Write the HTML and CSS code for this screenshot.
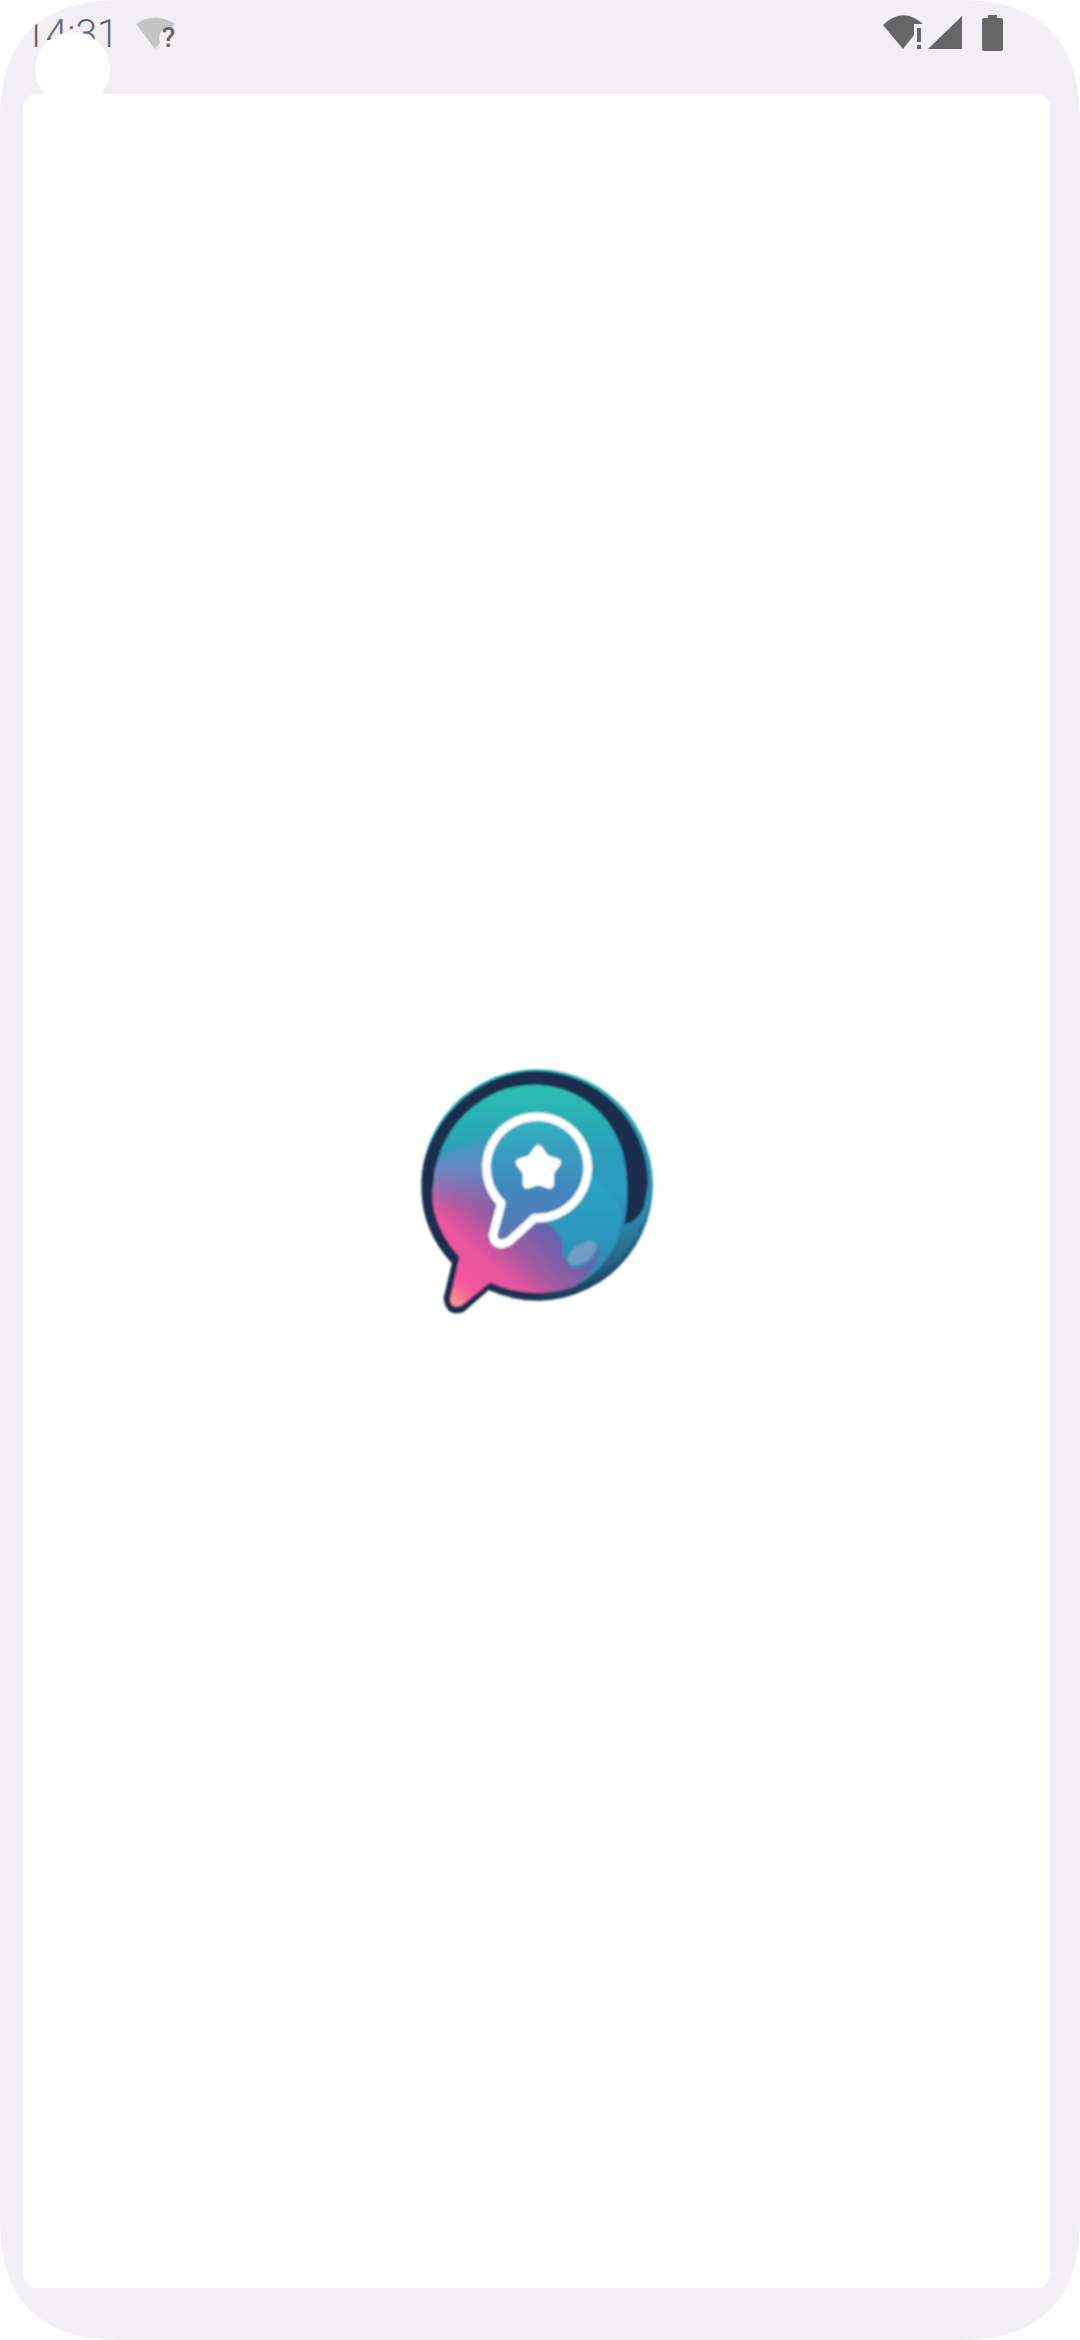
FILE: index.html
```html
<!DOCTYPE html>
<html lang="en">
<head>
    <meta charset="UTF-8">
    <meta name="viewport" content="width=device-width, initial-scale=1.0">
    <title>Splash</title>
    <link rel="stylesheet" href="styles.css">
</head>
<body>
    <div class="frame">
        <!-- Status bar -->
        <div class="status-bar">
            <div class="status-left">
                <span class="clock">14:31</span>
                <div class="wifi-unknown">
                    <svg width="40" height="32" viewBox="0 0 40 32">
                        <path class="icon-faint" d="M0 7 Q19 -6 39 7 L19 32 Z"/>
                        <circle class="icon-halo" cx="33" cy="21" r="10"/>
                    </svg>
                    <span class="question">?</span>
                </div>
            </div>
            <div class="status-right">
                <svg width="42" height="36" viewBox="0 0 42 36">
                    <path class="icon-solid" d="M0 10 Q20 -9 40 9 L31 9 L31 20 L20 34 Z"/>
                    <rect class="icon-solid" x="34" y="13" width="4" height="14"/>
                    <rect class="icon-solid" x="34" y="30" width="4" height="4"/>
                </svg>
                <svg class="signal" width="34" height="34" viewBox="0 0 34 34">
                    <path class="icon-solid" d="M0 33 L34 0 L34 33 Z"/>
                </svg>
                <svg class="battery" width="21" height="36" viewBox="0 0 21 36">
                    <path class="icon-solid" d="M6 0 H15 V3 H19 Q21 3 21 5 V34 Q21 36 19 36 H2 Q0 36 0 34 V5 Q0 3 2 3 H6 Z"/>
                </svg>
            </div>
        </div>

        <!-- Contenuto -->
        <div class="card">
            <svg class="logo" width="280" height="280" viewBox="-10 3 840 840">
                <defs>
                    <clipPath id="body-clip">
                        <path d="M100 400 C110 230 250 105 400 105 C560 105 680 230 680 400 C682 440 680 490 672 520 C690 525 725 505 748 430 A338 338 0 0 1 270 697 L185 765 Q150 780 150 745 L178 620 C120 560 85 470 100 400 Z"/>
                    </clipPath>
                    <linearGradient id="rim" x1="0" y1="0" x2="0" y2="1">
                        <stop offset="0" stop-color="#2bb5b8"/>
                        <stop offset="0.55" stop-color="#2a88ab"/>
                        <stop offset="1" stop-color="#1b2e4d"/>
                    </linearGradient>
                    <linearGradient id="body" gradientUnits="userSpaceOnUse" x1="0" y1="120" x2="0" y2="730">
                        <stop offset="0" stop-color="#2cbdb4"/>
                        <stop offset="0.3" stop-color="#2a9fb9"/>
                        <stop offset="0.5" stop-color="#2b9cc0"/>
                        <stop offset="0.72" stop-color="#2b7a9e"/>
                        <stop offset="1" stop-color="#1e476a"/>
                    </linearGradient>
                    <linearGradient id="pink" gradientUnits="userSpaceOnUse" x1="170" y1="700" x2="440" y2="410">
                        <stop offset="0" stop-color="#f6559f"/>
                        <stop offset="0.28" stop-color="#e8559f"/>
                        <stop offset="0.5" stop-color="#a05aa0"/>
                        <stop offset="0.78" stop-color="#6066ae"/>
                        <stop offset="1" stop-color="#4482ba"/>
                    </linearGradient>
                    <linearGradient id="lobe-fade" gradientUnits="userSpaceOnUse" x1="0" y1="270" x2="0" y2="480">
                        <stop offset="0" stop-color="#3f9cc2"/>
                        <stop offset="0.45" stop-color="#6490c4" stop-opacity="0.8"/>
                        <stop offset="1" stop-color="#8d78b8" stop-opacity="0"/>
                    </linearGradient>
                    <linearGradient id="ring-fill" gradientUnits="userSpaceOnUse" x1="0" y1="200" x2="0" y2="590">
                        <stop offset="0" stop-color="#33b4c4"/>
                        <stop offset="0.55" stop-color="#3f88bd"/>
                        <stop offset="1" stop-color="#6572b5"/>
                    </linearGradient>
                    <filter id="soft"><feGaussianBlur stdDeviation="3"/></filter>
                    <filter id="haze" x="-50%" y="-50%" width="200%" height="200%"><feGaussianBlur stdDeviation="24"/></filter>
                </defs>
                <g filter="url(#soft)">
                    <path fill="url(#rim)" d="M411 58 A347 347 0 1 1 265 720 L190 785 Q140 805 130 745 L155 640 A347 347 0 0 1 411 58 Z"/>
                    <path class="navy" d="M405 63 A338 338 0 0 1 743 400 L720 540 L400 745 L265 720 L190 785 Q140 805 130 745 L155 640 C90 570 60 490 64 400 C68 220 230 63 405 63 Z"/>
                    <g clip-path="url(#body-clip)">
                        <rect fill="url(#body)" x="60" y="60" width="720" height="720"/>
                        <path class="blue-lobe" d="M470 260 C500 340 600 380 650 450 C690 520 640 640 540 700 L420 520 Z"/>
                        <path fill="url(#pink)" d="M90 370 C120 310 190 275 280 272 L340 470 C380 510 450 500 480 560 C500 600 470 620 510 650 C550 670 590 610 600 570 C610 640 560 690 480 740 L130 800 Z"/>
                        <path fill="url(#lobe-fade)" d="M90 370 C120 310 190 275 280 272 L340 490 L90 490 Z"/>
                        <circle class="tail-glow" cx="150" cy="775" r="55" filter="url(#haze)"/>
                        <ellipse class="spot" cx="545" cy="610" rx="50" ry="27" transform="rotate(-35 545 610)"/>
                    </g>
                    <path fill="url(#ring-fill)" stroke="#ffffff" stroke-width="26" stroke-linejoin="round" d="M402 504 Q360 545 325 575 Q285 595 278 555 L303 460 A152 152 0 1 1 402 504 Z"/>
                    <path class="star" d="M414 298 L435 327 L469 338 L448 367 L448 403 L414 392 L380 403 L380 367 L359 338 L393 327 Z"/>
                </g>
            </svg>
        </div>

        <!-- Cerchio sopra l'orologio -->
        <div class="dot"></div>
    </div>
</body>
</html>
```

FILE: styles.css
```css
body {
    margin: 0;
    background-color: #ffffff;
    font-family: Roboto, Arial, sans-serif;
}

.frame {
    position: relative;
    display: flex;
    flex-direction: column;
    height: 2340px;
    padding: 0 30px 52px 23px;
    box-sizing: border-box;
    background-color: #f1eff4;
    clip-path: path("M0 120 C0 40 40 0 120 0 H960 C1040 0 1080 40 1080 120 V2220 C1080 2300 1040 2340 960 2340 H120 C40 2340 0 2300 0 2220 Z");
}

/* Barra di stato */
.status-bar {
    display: flex;
    justify-content: space-between;
    height: 94px;
    flex-shrink: 0;
}

.status-left {
    display: flex;
    align-items: flex-start;
    padding-left: 1px;
    padding-top: 14px;
}

.clock {
    font-size: 39px;
    font-weight: 300;
    line-height: 40px;
    color: #666666;
}

.wifi-unknown {
    position: relative;
    margin-left: 17px;
    margin-top: 3px;
    height: 32px;
}

.question {
    position: absolute;
    left: 26px;
    top: 7px;
    font-size: 28px;
    font-weight: 500;
    line-height: 28px;
    color: #666666;
}

.status-right {
    display: flex;
    align-items: flex-start;
    padding-top: 15px;
    padding-right: 47px;
}

.signal {
    margin-left: 3px;
    margin-top: 1px;
}

.battery {
    margin-left: 20px;
}

.icon-solid {
    fill: #666666;
}

.icon-faint {
    fill: #c4c4c4;
}

.icon-halo {
    fill: #f1eff4;
}

/* Contenuto */
.card {
    flex: 1;
    display: flex;
    justify-content: center;
    align-items: center;
    background-color: #ffffff;
    border-radius: 14px;
}

.dot {
    position: absolute;
    left: 35px;
    top: 32px;
    width: 75px;
    height: 75px;
    background-color: #ffffff;
    border-radius: 50%;
}

/* Logo */
.navy {
    fill: #1b2e4d;
}

.blue-lobe {
    fill: #2ea3c6;
    opacity: 0.7;
}

.tail-glow {
    fill: #fb9a8c;
}

.spot {
    fill: #a0a4d4;
    opacity: 0.6;
}

.star {
    fill: #ffffff;
    stroke: #ffffff;
    stroke-width: 26;
    stroke-linejoin: round;
}
```
